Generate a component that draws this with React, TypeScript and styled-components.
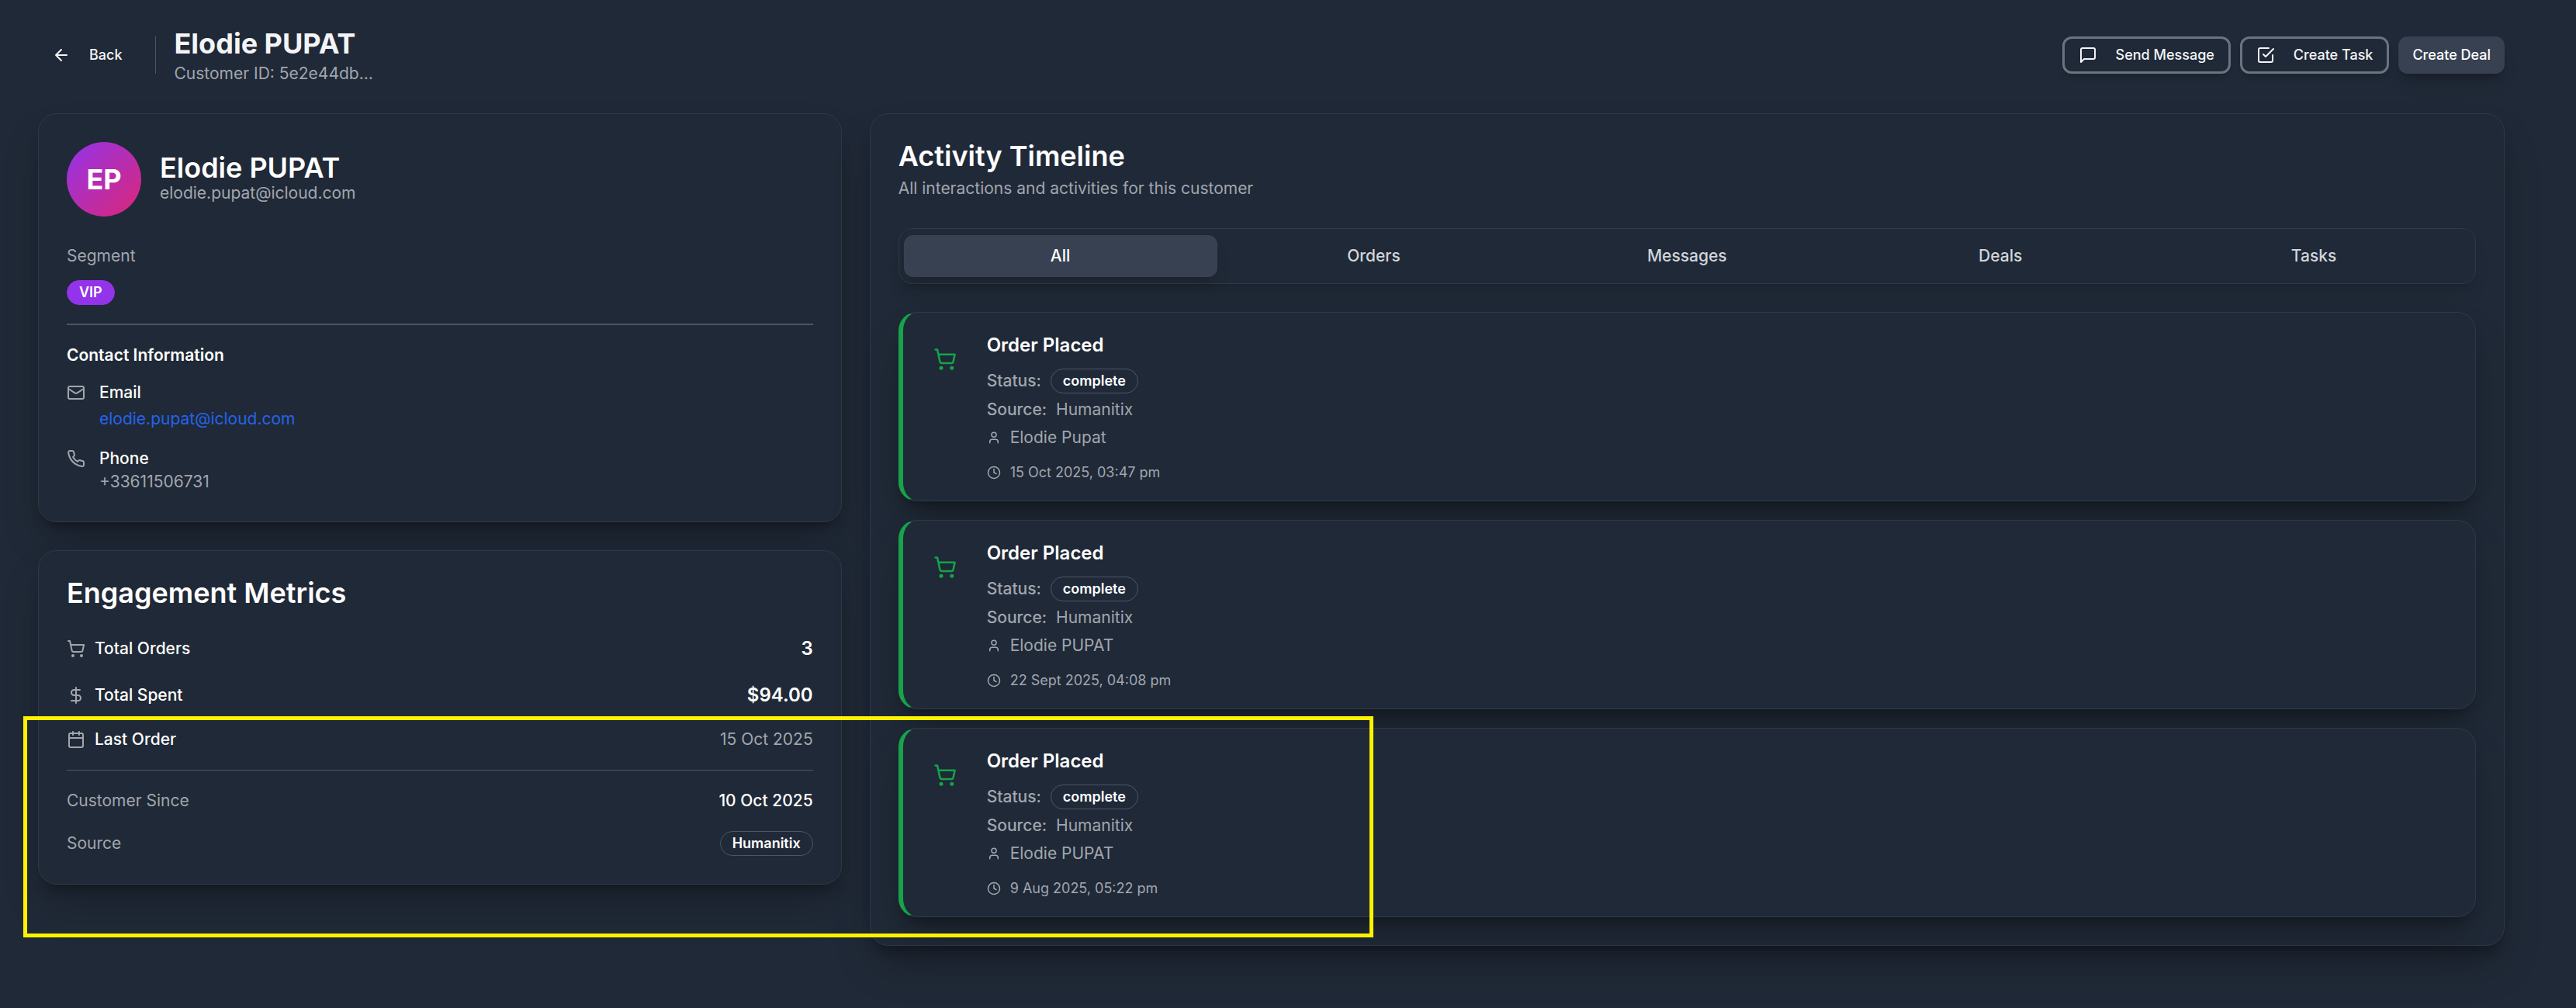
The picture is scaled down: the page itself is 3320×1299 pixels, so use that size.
import React, { useState } from "react";
import styled, { createGlobalStyle, css } from "styled-components";

const color = {
  page: "#202937",
  panel: "#202937",
  text: "#ffffff",
  heading: "#f3f4f6",
  soft: "#d1d5db",
  muted: "#a1a6af",
  line: "#4b5563",
  hairline: "#2f3946",
  active: "#384152",
  outline: "#6b7280",
  green: "#16a34a",
  link: "#2563eb",
  purple: "#9333ea",
  pink: "#db2777",
  marker: "#fff200",
};

const cardShadow = "0 30px 56px -8px rgba(0, 0, 0, 0.2), 0 12px 18px -9px rgba(0, 0, 0, 0.4)";

const GlobalStyle = createGlobalStyle`
  *, *::before, *::after { box-sizing: border-box; }
  body {
    margin: 0;
    background: ${color.page};
    color: ${color.text};
    font-family: Inter, "Noto Sans", sans-serif;
    font-size: 21px;
    line-height: 30px;
  }
  h1, h2, h3, h4, p, dl, dd, dt, ul { margin: 0; padding: 0; }
  ul { list-style: none; }
  button { font-family: inherit; cursor: pointer; }
`;

const Page = styled.div`
  position: relative;
  min-height: 100vh;
  padding: 32px 92px 80px 49px;
`;

const Header = styled.header`
  display: flex;
  align-items: center;
  justify-content: space-between;
  margin-bottom: 36px;
`;

const HeaderGroup = styled.div<{ $gap: number }>`
  display: flex;
  align-items: center;
  gap: ${(p) => p.$gap}px;
`;

const VerticalRule = styled.span`
  width: 1px;
  height: 48px;
  background: ${color.line};
`;

const PageTitle = styled.h1`
  font-size: 36px;
  line-height: 48px;
  font-weight: 700;
  color: ${color.heading};
`;

const Muted = styled.p`
  color: ${color.muted};
`;

const Button = styled.button<{ $variant: "ghost" | "outline" | "solid" }>`
  display: inline-flex;
  align-items: center;
  gap: 24px;
  height: 48px;
  padding: 0 18px;
  border: 0;
  border-radius: 12px;
  background: transparent;
  color: ${color.heading};
  font-size: 18px;
  line-height: 24px;
  font-weight: 500;
  white-space: nowrap;
  ${(p) =>
    p.$variant === "outline" &&
    css`
      border: 3px solid ${color.outline};
      box-shadow: 0 6px 9px -2px rgba(0, 0, 0, 0.16);
    `}
  ${(p) =>
    p.$variant === "solid" &&
    css`
      background: ${color.active};
      color: ${color.text};
      box-shadow: 0 15px 22px -5px rgba(0, 0, 0, 0.14), 0 6px 9px -5px rgba(0, 0, 0, 0.3);
    `}
`;

const Columns = styled.main`
  display: grid;
  grid-template-columns: minmax(0, 1fr) minmax(0, 1fr) minmax(0, 1fr);
  gap: 36px;
  align-items: start;
`;

const SideColumn = styled.div`
  display: grid;
  gap: 36px;
`;

const Card = styled.section`
  padding: 36px;
  border: 1px solid ${color.hairline};
  border-radius: 24px;
  background: ${color.panel};
  box-shadow: ${cardShadow};
`;

const WideCard = styled(Card)`
  grid-column: span 2;
`;

const CardTitle = styled.h2`
  font-size: 36px;
  line-height: 36px;
  font-weight: 600;
`;

const Profile = styled.div`
  display: flex;
  align-items: center;
  gap: 24px;
  margin-bottom: 36px;
`;

const Avatar = styled.div`
  display: grid;
  place-items: center;
  width: 96px;
  height: 96px;
  border-radius: 50%;
  background: linear-gradient(135deg, ${color.purple}, ${color.pink});
  font-size: 36px;
  font-weight: 700;
`;

const Segment = styled.div`
  display: grid;
  justify-items: start;
  gap: 16px;
`;

const Pill = styled.span<{ $filled?: boolean }>`
  display: inline-flex;
  align-items: center;
  height: 32px;
  padding: 0 15px;
  border: 1px solid ${(p) => (p.$filled ? color.purple : color.line)};
  border-radius: 16px;
  background: ${(p) => (p.$filled ? color.purple : "transparent")};
  color: ${color.text};
  font-size: 18px;
  line-height: 24px;
  font-weight: 600;
`;

const Divider = styled.hr<{ $thickness: number }>`
  width: 100%;
  height: ${(p) => p.$thickness}px;
  margin: 24px 0;
  border: 0;
  background: ${color.line};
`;

const SubHeading = styled.h3`
  margin-bottom: 18px;
  font-size: 21px;
  font-weight: 600;
`;

const ContactList = styled.ul`
  display: grid;
  gap: 18px;
`;

const ContactItem = styled.li`
  display: flex;
  gap: 18px;
  svg {
    margin-top: 3px;
    color: ${color.muted};
  }
`;

const Strong = styled.p`
  font-weight: 500;
`;

const LinkLine = styled.div`
  font-size: 24px;
  line-height: 36px;
`;

const MailLink = styled.a`
  font-size: 21px;
  color: ${color.link};
  text-decoration: none;
`;

const Metrics = styled.dl`
  display: grid;
  gap: 24px;
  margin-top: 36px;
`;

const MetricDivider = styled.div`
  height: 1px;
  background: ${color.line};
`;

const Metric = styled.div`
  display: flex;
  align-items: center;
  justify-content: space-between;
`;

const MetricName = styled.dt<{ $muted?: boolean }>`
  display: flex;
  align-items: center;
  gap: 12px;
  color: ${(p) => (p.$muted ? color.muted : color.text)};
  font-weight: ${(p) => (p.$muted ? 400 : 500)};
  svg {
    color: ${color.muted};
  }
`;

const MetricValue = styled.dd<{ $kind: "large" | "plain" | "medium" }>`
  display: flex;
  ${(p) => p.$kind === "large" && "font-size: 24px; line-height: 36px; font-weight: 600;"}
  ${(p) => p.$kind === "medium" && "font-weight: 500;"}
  ${(p) => p.$kind === "plain" && `color: ${color.muted};`}
`;

const CardLead = styled(Muted)`
  margin-top: 9px;
`;

const TabList = styled.div`
  display: grid;
  grid-auto-flow: column;
  grid-auto-columns: minmax(0, 1fr);
  margin: 36px 0;
  padding: 8px 6px;
  border: 1px solid ${color.hairline};
  border-radius: 18px;
  box-shadow: 0 15px 22px -5px rgba(0, 0, 0, 0.1), 0 6px 9px -6px rgba(0, 0, 0, 0.1);
`;

const Tab = styled.button<{ $active: boolean }>`
  height: 54px;
  padding: 0;
  border: 0;
  border-radius: 12px;
  background: ${(p) => (p.$active ? color.active : "transparent")};
  color: ${(p) => (p.$active ? color.text : color.soft)};
  box-shadow: ${(p) => (p.$active ? "0 15px 22px -5px rgba(0, 0, 0, 0.14)" : "none")};
  font-size: 21px;
  line-height: 30px;
  font-weight: 500;
`;

const Events = styled.ul`
  display: grid;
  gap: 24px;
`;

const Event = styled.li`
  display: flex;
  gap: 24px;
  padding: 24px;
  border: 1px solid ${color.hairline};
  border-left: 6px solid ${color.green};
  border-radius: 24px;
  background: ${color.panel};
  box-shadow: ${cardShadow};
`;

const EventIcon = styled.span`
  display: grid;
  place-items: center;
  width: 60px;
  height: 60px;
  margin-top: 6px;
  color: ${color.green};
`;

const EventTitle = styled.h3`
  margin-bottom: 12px;
  font-size: 24px;
  line-height: 36px;
  font-weight: 600;
`;

const EventLines = styled.div`
  display: grid;
  gap: 6px;
  margin-bottom: 18px;
  color: ${color.muted};
`;

const EventLine = styled.div`
  display: flex;
  align-items: center;
  gap: 12px;
`;

const LineLabel = styled.span`
  font-weight: 500;
`;

const EventTime = styled(EventLine)`
  color: ${color.muted};
  font-size: 18px;
  line-height: 24px;
`;

/* Highlighter frame laid over the lower part of the page. */
const Highlight = styled.div`
  position: absolute;
  top: 923px;
  left: 30px;
  width: 1740px;
  height: 285px;
  border: 5px solid ${color.marker};
  pointer-events: none;
`;

const glyphs = {
  back: <path d="m12 19-7-7 7-7M19 12H5" />,
  message: <path d="M21 15a2 2 0 0 1-2 2H7l-4 4V5a2 2 0 0 1 2-2h14a2 2 0 0 1 2 2z" />,
  task: (
    <>
      <path d="m9 11 3 3L22 4" />
      <path d="M21 12v7a2 2 0 0 1-2 2H5a2 2 0 0 1-2-2V5a2 2 0 0 1 2-2h11" />
    </>
  ),
  mail: (
    <>
      <rect width="20" height="16" x="2" y="4" rx="2" />
      <path d="m22 7-8.97 5.7a1.94 1.94 0 0 1-2.06 0L2 7" />
    </>
  ),
  phone: (
    <path d="M22 16.92v3a2 2 0 0 1-2.18 2 19.79 19.79 0 0 1-8.63-3.07 19.5 19.5 0 0 1-6-6 19.79 19.79 0 0 1-3.07-8.67A2 2 0 0 1 4.11 2h3a2 2 0 0 1 2 1.72 12.84 12.84 0 0 0 .7 2.81 2 2 0 0 1-.45 2.11L8.09 9.91a16 16 0 0 0 6 6l1.27-1.27a2 2 0 0 1 2.11-.45 12.84 12.84 0 0 0 2.81.7A2 2 0 0 1 22 16.92z" />
  ),
  cart: (
    <>
      <circle cx="8" cy="21" r="1" />
      <circle cx="19" cy="21" r="1" />
      <path d="M2.05 2.05h2l2.66 12.42a2 2 0 0 0 2 1.58h9.78a2 2 0 0 0 1.95-1.57l1.65-7.43H5.12" />
    </>
  ),
  dollar: (
    <>
      <path d="M12 2v20" />
      <path d="M17 5H9.5a3.5 3.5 0 0 0 0 7h5a3.5 3.5 0 0 1 0 7H6" />
    </>
  ),
  calendar: (
    <>
      <path d="M8 2v4M16 2v4M3 10h18" />
      <rect width="18" height="18" x="3" y="4" rx="2" />
    </>
  ),
  user: (
    <>
      <path d="M19 21v-2a4 4 0 0 0-4-4H9a4 4 0 0 0-4 4v2" />
      <circle cx="12" cy="7" r="4" />
    </>
  ),
  clock: (
    <>
      <circle cx="12" cy="12" r="10" />
      <path d="M12 6v6l4 2" />
    </>
  ),
};

const IconSvg = styled.svg`
  display: block;
  flex: none;
  fill: none;
  stroke: currentColor;
  stroke-width: 2;
  stroke-linecap: round;
  stroke-linejoin: round;
`;

function Icon({ name, size = 24 }: { name: keyof typeof glyphs; size?: number }) {
  return (
    <IconSvg width={size} height={size} viewBox="0 0 24 24" aria-hidden="true">
      {glyphs[name]}
    </IconSvg>
  );
}

const tabs = ["All", "Orders", "Messages", "Deals", "Tasks"];

const orders = [
  { name: "Elodie Pupat", time: "15 Oct 2025, 03:47 pm" },
  { name: "Elodie PUPAT", time: "22 Sept 2025, 04:08 pm" },
  { name: "Elodie PUPAT", time: "9 Aug 2025, 05:22 pm" },
];

export default function App() {
  const [tab, setTab] = useState("All");

  return (
    <Page>
      <GlobalStyle />
      <Header>
        <HeaderGroup $gap={24}>
          <Button $variant="ghost" type="button">
            <Icon name="back" />
            Back
          </Button>
          <VerticalRule />
          <div>
            <PageTitle>Elodie PUPAT</PageTitle>
            <Muted>Customer ID: 5e2e44db...</Muted>
          </div>
        </HeaderGroup>
        <HeaderGroup $gap={12}>
          <Button $variant="outline" type="button">
            <Icon name="message" />
            Send Message
          </Button>
          <Button $variant="outline" type="button">
            <Icon name="task" />
            Create Task
          </Button>
          <Button $variant="solid" type="button">
            Create Deal
          </Button>
        </HeaderGroup>
      </Header>

      <Columns>
        <SideColumn>
          <Card>
            <Profile>
              <Avatar>EP</Avatar>
              <div>
                <CardTitle>Elodie PUPAT</CardTitle>
                <Muted>elodie.pupat@icloud.com</Muted>
              </div>
            </Profile>
            <Segment>
              <Muted>Segment</Muted>
              <Pill $filled>VIP</Pill>
            </Segment>
            <Divider $thickness={2} />
            <SubHeading>Contact Information</SubHeading>
            <ContactList>
              <ContactItem>
                <Icon name="mail" />
                <div>
                  <Strong>Email</Strong>
                  <LinkLine>
                    <MailLink href="mailto:elodie.pupat@icloud.com">elodie.pupat@icloud.com</MailLink>
                  </LinkLine>
                </div>
              </ContactItem>
              <ContactItem>
                <Icon name="phone" />
                <div>
                  <Strong>Phone</Strong>
                  <Muted>+33611506731</Muted>
                </div>
              </ContactItem>
            </ContactList>
          </Card>

          <Card>
            <CardTitle>Engagement Metrics</CardTitle>
            <Metrics>
              <Metric>
                <MetricName>
                  <Icon name="cart" />
                  Total Orders
                </MetricName>
                <MetricValue $kind="large">3</MetricValue>
              </Metric>
              <Metric>
                <MetricName>
                  <Icon name="dollar" />
                  Total Spent
                </MetricName>
                <MetricValue $kind="large">$94.00</MetricValue>
              </Metric>
              <Metric>
                <MetricName>
                  <Icon name="calendar" />
                  Last Order
                </MetricName>
                <MetricValue $kind="plain">15 Oct 2025</MetricValue>
              </Metric>
              <MetricDivider />
              <Metric>
                <MetricName $muted>Customer Since</MetricName>
                <MetricValue $kind="medium">10 Oct 2025</MetricValue>
              </Metric>
              <Metric>
                <MetricName $muted>Source</MetricName>
                <MetricValue $kind="medium">
                  <Pill>Humanitix</Pill>
                </MetricValue>
              </Metric>
            </Metrics>
          </Card>
        </SideColumn>

        <WideCard>
          <CardTitle>Activity Timeline</CardTitle>
          <CardLead>All interactions and activities for this customer</CardLead>
          <TabList role="tablist">
            {tabs.map((name) => (
              <Tab
                key={name}
                type="button"
                role="tab"
                aria-selected={tab === name}
                $active={tab === name}
                onClick={() => setTab(name)}
              >
                {name}
              </Tab>
            ))}
          </TabList>
          <Events>
            {orders.map((order) => (
              <Event key={order.time}>
                <EventIcon>
                  <Icon name="cart" size={30} />
                </EventIcon>
                <div>
                  <EventTitle>Order Placed</EventTitle>
                  <EventLines>
                    <EventLine>
                      <LineLabel>Status:</LineLabel>
                      <Pill>complete</Pill>
                    </EventLine>
                    <EventLine>
                      <LineLabel>Source:</LineLabel>
                      <span>Humanitix</span>
                    </EventLine>
                    <EventLine>
                      <Icon name="user" size={18} />
                      <span>{order.name}</span>
                    </EventLine>
                  </EventLines>
                  <EventTime>
                    <Icon name="clock" size={18} />
                    <time>{order.time}</time>
                  </EventTime>
                </div>
              </Event>
            ))}
          </Events>
        </WideCard>
      </Columns>
      <Highlight />
    </Page>
  );
}
